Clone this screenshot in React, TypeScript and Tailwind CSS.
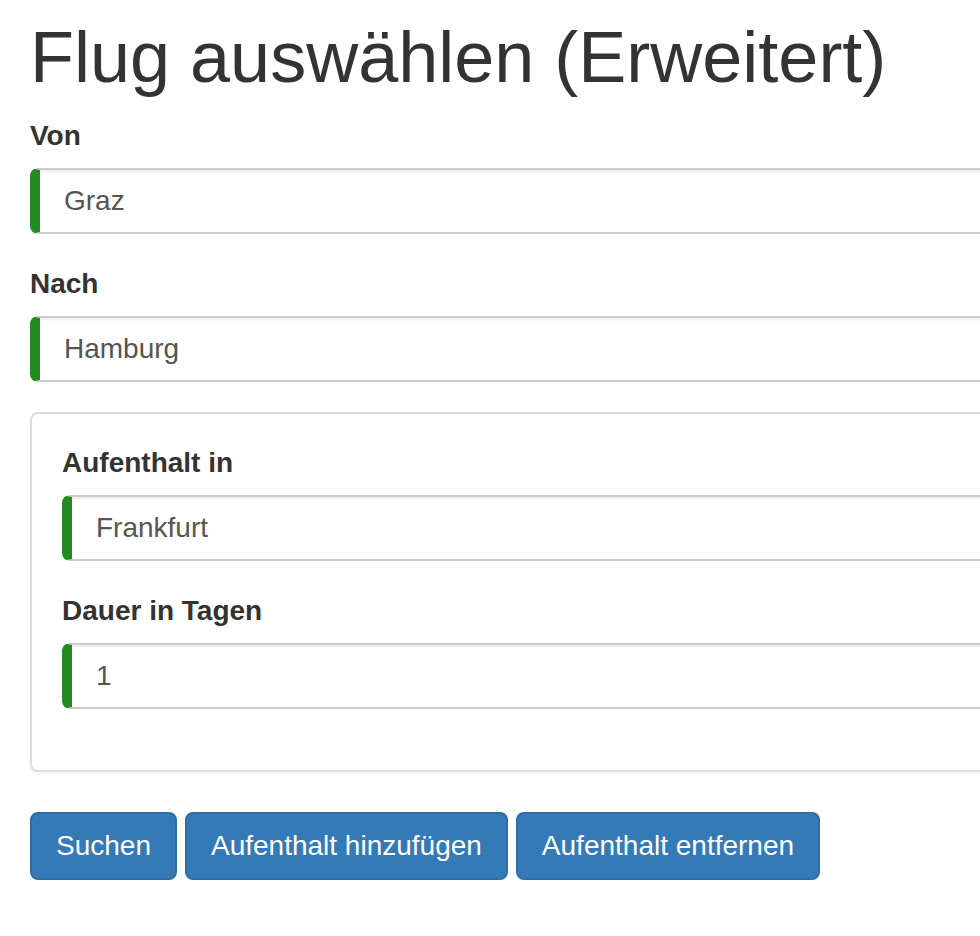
const fields = [
  { label: 'Von', value: 'Graz' },
  { label: 'Nach', value: 'Hamburg' },
];

const stopover = [
  { label: 'Aufenthalt in', value: 'Frankfurt' },
  { label: 'Dauer in Tagen', value: '1' },
];

const buttons = ['Suchen', 'Aufenthalt hinzufügen', 'Aufenthalt entfernen'];

const Field = ({ label, value }: { label: string; value: string }) => (
  <div className="mb-[30px]">
    <label className="block font-bold text-[28px] leading-[40px] mb-[12px]">{label}</label>
    <input
      readOnly
      value={value}
      className="block w-full h-[66px] px-[24px] text-[28px] text-[#555] bg-white border-2 border-[#ccc] border-l-[10px] border-l-[#228b22] rounded-[8px] shadow-[inset_0_2px_2px_rgba(0,0,0,0.075)] outline-none"
    />
  </div>
);

export default function App() {
  return (
    <div className="w-full min-h-[936px] overflow-hidden bg-white text-[#333] font-['Liberation_Sans',Arial,sans-serif]">
      <div className="w-[1300px] px-[30px]">
        <h1 className="mt-[18px] mb-[19px] text-[72px] leading-[79px] font-normal">
          Flug auswählen (Erweitert)
        </h1>

        {fields.map((f) => (
          <Field key={f.label} label={f.label} value={f.value} />
        ))}

        <div className="mt-[3px] mb-[40px] border-2 border-[#ddd] rounded-[8px] bg-white shadow-[0_2px_2px_rgba(0,0,0,0.05)] px-[30px] pt-[29px] pb-[31px]">
          {stopover.map((f) => (
            <Field key={f.label} label={f.label} value={f.value} />
          ))}
        </div>

        <div className="flex gap-[8px]">
          {buttons.map((b) => (
            <button
              key={b}
              className="h-[68px] px-[24px] text-[28px] leading-[40px] text-white bg-[#337ab7] border-2 border-[#2e6da4] rounded-[8px]"
            >
              {b}
            </button>
          ))}
        </div>
      </div>
    </div>
  );
}
